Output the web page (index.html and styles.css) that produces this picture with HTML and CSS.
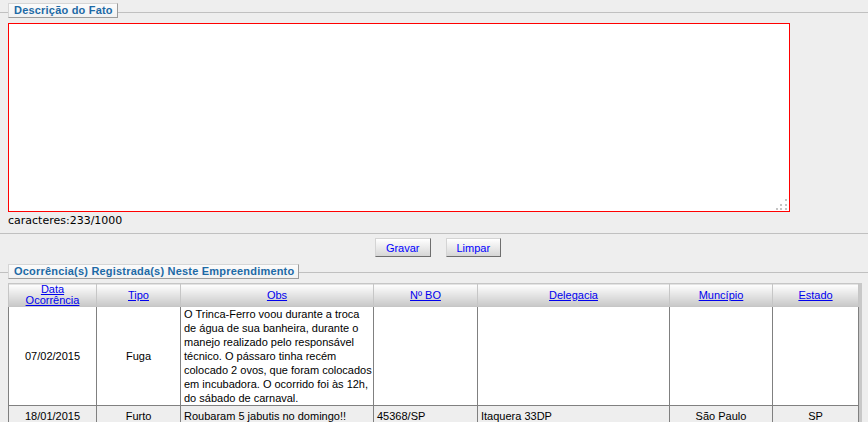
FILE: index.html
```html
<!DOCTYPE html>
<html lang="pt-BR">
<head>
<meta charset="utf-8">
<title>Descrição do Fato</title>
<link rel="stylesheet" href="styles.css">
</head>
<body>
<div class="page">
  <section class="group">
    <div class="group-head"><span class="legend">Descrição do Fato</span></div>
    <div class="group-body">
      <textarea class="fact"></textarea>
      <div class="counter">caracteres:233/1000</div>
    </div>
  </section>

  <div class="actions">
    <button class="btn" type="button">Gravar</button>
    <button class="btn" type="button">Limpar</button>
  </div>

  <section class="group group-occ">
    <div class="group-head"><span class="legend">Ocorrência(s) Registrada(s) Neste Empreendimento</span></div>
    <div class="group-body">
      <table class="grid">
        <colgroup>
          <col class="c-date">
          <col class="c-type">
          <col class="c-obs">
          <col class="c-bo">
          <col class="c-del">
          <col class="c-mun">
          <col class="c-uf">
        </colgroup>
        <thead>
          <tr>
            <th><a href="#">Data<br>Ocorrência</a></th>
            <th><a href="#">Tipo</a></th>
            <th><a href="#">Obs</a></th>
            <th><a href="#">Nº BO</a></th>
            <th><a href="#">Delegacia</a></th>
            <th><a href="#">Muncípio</a></th>
            <th><a href="#">Estado</a></th>
          </tr>
        </thead>
        <tbody>
          <tr class="row-odd">
            <td class="center">07/02/2015</td>
            <td class="center">Fuga</td>
            <td>O Trinca-Ferro voou durante a troca de água de sua banheira, durante o manejo realizado pelo responsável técnico. O pássaro tinha recém colocado 2 ovos, que foram colocados em incubadora. O ocorrido foi às 12h, do sábado de carnaval.</td>
            <td></td>
            <td></td>
            <td></td>
            <td></td>
          </tr>
          <tr class="row-even">
            <td class="center">18/01/2015</td>
            <td class="center">Furto</td>
            <td>Roubaram 5 jabutis no domingo!!</td>
            <td>45368/SP</td>
            <td>Itaquera 33DP</td>
            <td class="center">São Paulo</td>
            <td class="center">SP</td>
          </tr>
        </tbody>
      </table>
    </div>
  </section>
</div>
</body>
</html>
```

FILE: styles.css
```css
html, body {
  margin: 0;
  padding: 0;
}

body {
  background: #eeeeee;
  font-family: "Liberation Sans", Arial, sans-serif;
  font-size: 11px;
  color: #000;
  overflow: hidden;
}

.group-head {
  display: flex;
  padding-top: 3px;
}

.group-head::before,
.group-head::after {
  content: "";
  border-top: 1px solid #c0c0c0;
  margin-top: 9px;
  height: 0;
}

.group-head::before {
  width: 8px;
  flex: none;
}

.group-head::after {
  flex: 1;
}

.legend {
  display: block;
  padding: 0 4px 0 5px;
  line-height: 13px;
  font-weight: bold;
  font-size: 11px;
  letter-spacing: 0.2px;
  color: #1d6aa6;
  background: linear-gradient(#fbfbfb, #f2f2f2);
  border: 1px solid;
  border-color: #d6d6d6 #9c9c9c #9c9c9c #d6d6d6;
}

.group-body {
  padding: 0 8px;
}

.fact {
  display: block;
  box-sizing: border-box;
  width: 782px;
  height: 189px;
  margin: 5px 0 0;
  border: 1px solid #ff0000;
  background-color: #fff;
  background-image:
    linear-gradient(#c4c4c4, #c4c4c4),
    linear-gradient(#c4c4c4, #c4c4c4),
    linear-gradient(#c4c4c4, #c4c4c4),
    linear-gradient(#c4c4c4, #c4c4c4),
    linear-gradient(#c4c4c4, #c4c4c4),
    linear-gradient(#c4c4c4, #c4c4c4);
  background-size: 2px 2px;
  background-repeat: no-repeat;
  background-position:
    right 2px bottom 1px,
    right 2px bottom 5px,
    right 2px bottom 10px,
    right 7px bottom 1px,
    right 7px bottom 5px,
    right 11px bottom 1px;
  resize: none;
  padding: 2px;
  font-family: "Liberation Sans", Arial, sans-serif;
  font-size: 11px;
  outline: none;
}

.counter {
  margin-top: 2px;
  line-height: 14px;
  font-family: "DejaVu Sans", Verdana, sans-serif;
  font-size: 11px;
  color: #000;
}

.actions {
  margin-top: 5px;
  border-top: 1px solid #c0c0c0;
  padding: 4px 0 0 8px;
  display: flex;
  justify-content: center;
  gap: 15px;
}

.btn {
  box-sizing: border-box;
  height: 19px;
  padding: 0 10px;
  margin: 0;
  font-family: "Liberation Sans", Arial, sans-serif;
  font-size: 11px;
  color: #0000ff;
  background: linear-gradient(#ffffff, #d6d6d6);
  border: 1px solid;
  border-color: #d4d4d4 #6e6e6e #6e6e6e #d4d4d4;
  border-radius: 0;
  cursor: pointer;
}

.group-occ .group-head {
  margin-top: 7px;
  padding-top: 0;
}

.group-occ .group-head::before,
.group-occ .group-head::after {
  margin-top: 8px;
}

.grid {
  margin-top: 4px;
  width: 851px;
  table-layout: fixed;
  border-collapse: collapse;
  box-shadow: 3px 0 0 #c8c8c8;
  background: #fff;
}

.c-date { width: 88px; }
.c-type { width: 84px; }
.c-obs { width: 193px; }
.c-bo { width: 104px; }
.c-del { width: 192px; }
.c-mun { width: 103px; }
.c-uf { width: 86px; }

.grid th {
  height: 22px;
  padding: 0;
  font-weight: normal;
  font-size: 11px;
  line-height: 11px;
  text-align: center;
  vertical-align: middle;
  background: linear-gradient(#ffffff, #c8c8c8);
  border: 1px solid #c6c6c6;
}

.grid th a {
  color: #0000ee;
  text-decoration: underline;
}

.grid td {
  padding: 0 0 0 3px;
  line-height: 14px;
  font-size: 11px;
  vertical-align: middle;
  border: 1px solid #808080;
  color: #000;
}

.grid td.center {
  text-align: center;
  padding-left: 0;
}

.row-odd td {
  background: #ffffff;
}

.row-even td {
  background: #eeeeee;
  padding-top: 3px;
  padding-bottom: 3px;
}
```
